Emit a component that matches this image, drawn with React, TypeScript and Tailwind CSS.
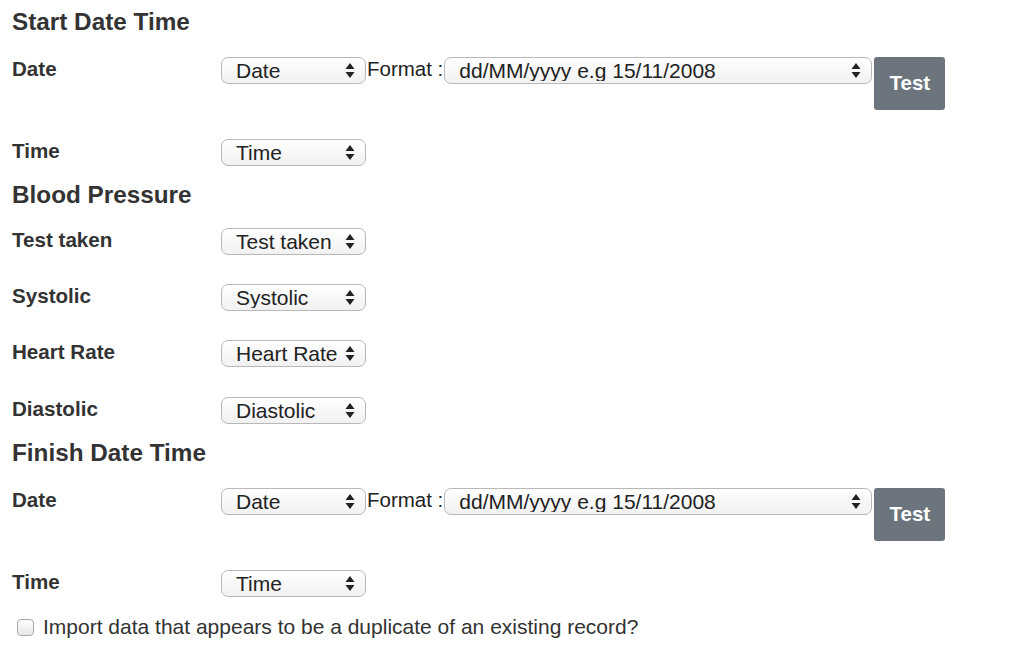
import React from "react";

const font = { fontFamily: '"Liberation Sans", Arial, Helvetica, sans-serif' };

function Arrows() {
	return (
		<svg width="10" height="17" viewBox="0 0 10 17" className="shrink-0">
			<path d="M5 1 L9.5 7 L0.5 7 Z" fill="#222" />
			<path d="M5 16 L9.5 10 L0.5 10 Z" fill="#222" />
		</svg>
	);
}

function FakeSelect({ value, width }: { value: string; width: string }) {
	return (
		<div
			className={`${width} h-[27px] shrink-0 flex items-center justify-between pl-[14px] pr-[10px] rounded-[7px] border border-[#b8b8b8] bg-gradient-to-b from-white to-[#f1f1f1] text-[21px] leading-none text-[#222]`}
		>
			<span className="truncate">{value}</span>
			<Arrows />
		</div>
	);
}

function Heading({ children, className }: { children: string; className: string }) {
	return (
		<h2 className={`pl-3 text-[24.3px] leading-[26px] font-bold text-[#333] ${className}`}>
			{children}
		</h2>
	);
}

function Label({ children }: { children: string }) {
	return (
		<div className="w-[209px] text-[20.6px] leading-[23px] font-bold text-[#333]">{children}</div>
	);
}

function Row({ label, value, className = "" }: { label: string; value: string; className?: string }) {
	return (
		<div className={`flex items-start pl-3 ${className}`}>
			<Label>{label}</Label>
			<FakeSelect value={value} width="w-[145px]" />
		</div>
	);
}

function DateRow() {
	return (
		<div className="flex items-start pl-3">
			<Label>Date</Label>
			<FakeSelect value="Date" width="w-[145px]" />
			<span className="ml-[1px] mr-[1px] text-[20.5px] leading-[24px] text-[#222]">Format :</span>
			<FakeSelect value="dd/MM/yyyy e.g 15/11/2008" width="w-[428px]" />
			<button className="ml-[2px] w-[71px] h-[53px] rounded-[3px] bg-[#6c757d] text-white text-[20.5px] font-bold leading-none">
				Test
			</button>
		</div>
	);
}

export default function App() {
	return (
		<div className="w-[1024px] h-[646px] bg-white overflow-hidden" style={font}>
			<div className="flex flex-col pt-[9px]">
				<Heading className="mb-[22px]">Start Date Time</Heading>
				<DateRow />
				<Row label="Time" value="Time" className="mt-[29px]" />

				<Heading className="mt-[16px] mb-[20px]">Blood Pressure</Heading>
				<Row label="Test taken" value="Test taken" />
				<Row label="Systolic" value="Systolic" className="mt-[29px]" />
				<Row label="Heart Rate" value="Heart Rate" className="mt-[29px]" />
				<Row label="Diastolic" value="Diastolic" className="mt-[30px]" />

				<Heading className="mt-[16px] mb-[22px]">Finish Date Time</Heading>
				<DateRow />
				<Row label="Time" value="Time" className="mt-[29px]" />

				<label className="flex items-center mt-[18px] pl-[17px] gap-[9px] text-[21px] leading-[24px] text-[#333]">
					<span className="w-[17px] h-[17px] rounded-[4px] border border-[#a9a9a9] bg-gradient-to-b from-white to-[#e6e6e6]" />
					Import data that appears to be a duplicate of an existing record?
				</label>
			</div>
		</div>
	);
}
